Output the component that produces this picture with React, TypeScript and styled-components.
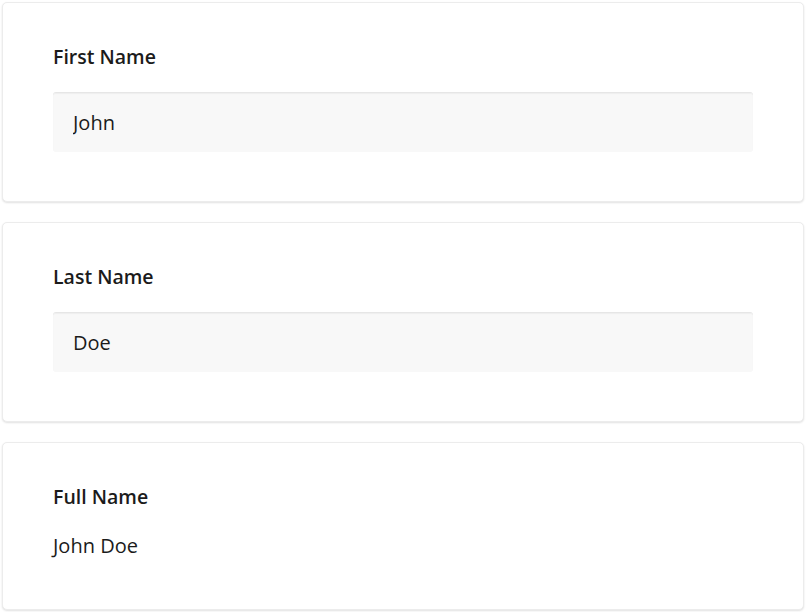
import styled, { createGlobalStyle } from "styled-components";

const GlobalStyle = createGlobalStyle`
    body {
        margin: 0;
        background: #ffffff;
        font-family: "Open Sans", "Noto Sans", sans-serif;
        color: #1b1b1b;
    }
`;

interface Field {
    label: string;
    value: string;
    editable: boolean;
}

const fields: Field[] = [
    { label: "First Name", value: "John", editable: true },
    { label: "Last Name", value: "Doe", editable: true },
    { label: "Full Name", value: "John Doe", editable: false },
];

const App = () => {
    return (
        <>
            <GlobalStyle />
            <Page>
                {fields.map((f) => (
                    <Card key={f.label}>
                        <Label>{f.label}</Label>
                        {f.editable ? (
                            <Input defaultValue={f.value} />
                        ) : (
                            <Value>{f.value}</Value>
                        )}
                    </Card>
                ))}
            </Page>
        </>
    );
};

export default App;

const Page = styled.div`
    display: flex;
    flex-direction: column;
    gap: 20px;
    padding: 2px;
`;

const Card = styled.div`
    display: flex;
    flex-direction: column;
    gap: 22px;
    padding: 41px 50px 49px;
    border: 1px solid #ececec;
    border-radius: 5px;
    background: #ffffff;
    box-shadow: 0 1px 2px rgba(0, 0, 0, 0.12);
`;

const Label = styled.div`
    font-size: 19.5px;
    font-weight: 600;
    line-height: 26px;
    color: #1b1b1b;
`;

const Input = styled.input`
    box-sizing: border-box;
    width: 100%;
    height: 60px;
    padding: 0 20px;
    border: none;
    border-top: 1px solid #e6e6e6;
    border-radius: 3px;
    background: #f8f8f8;
    box-shadow: inset 0 1px 1px rgba(0, 0, 0, 0.04);
    font-family: "Open Sans", "Noto Sans", sans-serif;
    font-size: 20px;
    color: #1b1b1b;
    outline: none;
`;

const Value = styled.div`
    font-size: 20px;
    line-height: 28px;
    color: #1b1b1b;
`;
